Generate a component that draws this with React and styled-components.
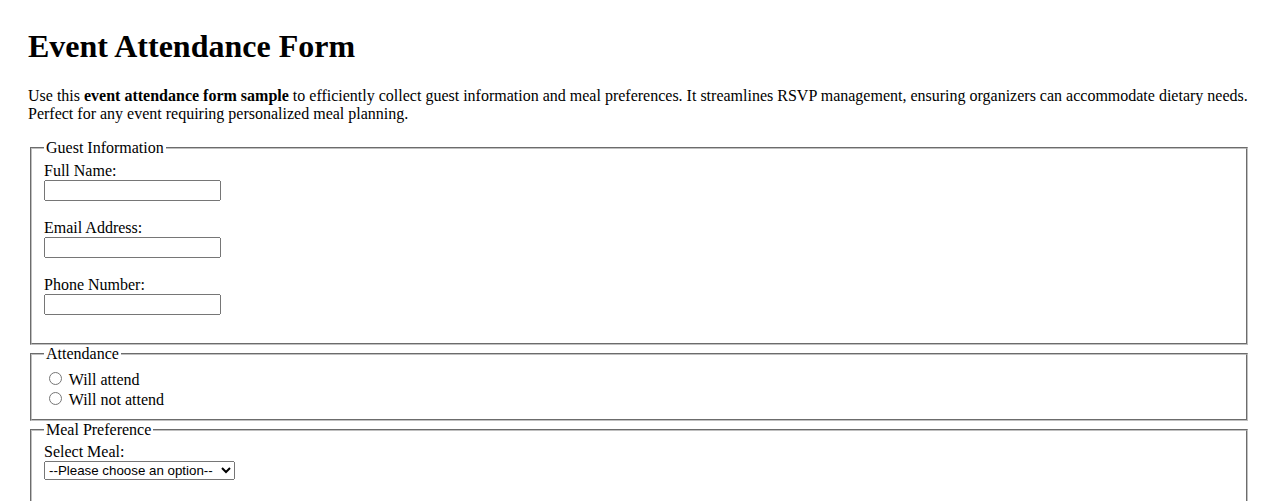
import styled, { createGlobalStyle } from "styled-components";

const GlobalStyle = createGlobalStyle`
  body {
    margin: 0;
    background: #fff;
    color: #000;
    font-family: "Liberation Serif", "Times New Roman", serif;
    font-size: 16px;
  }
`;

const Page = styled.div`
  padding: 28px 28px 28px;
`;

const Title = styled.h1`
  font-size: 32px;
  font-weight: bold;
  margin: 0 0 22px;
`;

const Intro = styled.p`
  margin: 0 0 16px;
`;

const Group = styled.fieldset`
  margin: 0 2px;
  padding: ${(p) => p.$top || "5.6px"} 12px ${(p) => p.$bottom || "10px"};
  border: 2px groove rgb(192, 192, 192);
  min-width: min-content;
`;

const Legend = styled.legend`
  padding: 0 2px;
`;

const Field = styled.div`
  margin-bottom: 18.1px;
`;

const Label = styled.label`
  display: block;
`;

const TextInput = styled.input`
  display: block;
  box-sizing: border-box;
  width: 177px;
  height: 21px;
  margin: 0;
  font-family: "Liberation Sans", Arial, sans-serif;
  font-size: 13.33px;
`;

const Choice = styled.label`
  display: block;
`;

const Radio = styled.input`
  margin: 3px 3px 0 5px;
`;

const Select = styled.select`
  display: block;
  box-sizing: border-box;
  width: 191px;
  height: 19px;
  margin: 0 0 17.6px;
  font-family: "Liberation Sans", Arial, sans-serif;
  font-size: 13.33px;
`;

const App = () => {
  return (
    <>
      <GlobalStyle />
      <Page>
        <Title>Event Attendance Form</Title>
        <Intro>
          Use this <strong>event attendance form sample</strong> to
          efficiently collect guest information and meal preferences. It
          streamlines RSVP management, ensuring organizers can accommodate
          dietary needs. Perfect for any event requiring personalized meal
          planning.
        </Intro>

        <form onSubmit={(e) => e.preventDefault()}>
          <Group $top="4.6px" $bottom="10.5px">
            <Legend>Guest Information</Legend>
            <Field>
              <Label htmlFor="fullName">Full Name:</Label>
              <TextInput id="fullName" type="text" />
            </Field>
            <Field>
              <Label htmlFor="email">Email Address:</Label>
              <TextInput id="email" type="email" />
            </Field>
            <Field>
              <Label htmlFor="phone">Phone Number:</Label>
              <TextInput id="phone" type="tel" />
            </Field>
          </Group>

          <Group $top="5.6px" $bottom="10px">
            <Legend>Attendance</Legend>
            <Choice>
              <Radio type="radio" name="attendance" value="yes" /> Will attend
            </Choice>
            <Choice>
              <Radio type="radio" name="attendance" value="no" /> Will not
              attend
            </Choice>
          </Group>

          <Group $top="3.6px">
            <Legend>Meal Preference</Legend>
            <Label htmlFor="meal">Select Meal:</Label>
            <Select id="meal" defaultValue="">
              <option value="">--Please choose an option--</option>
              <option value="chicken">Chicken</option>
              <option value="fish">Fish</option>
              <option value="vegetarian">Vegetarian</option>
              <option value="vegan">Vegan</option>
            </Select>
          </Group>
        </form>
      </Page>
    </>
  );
};

export default App;
